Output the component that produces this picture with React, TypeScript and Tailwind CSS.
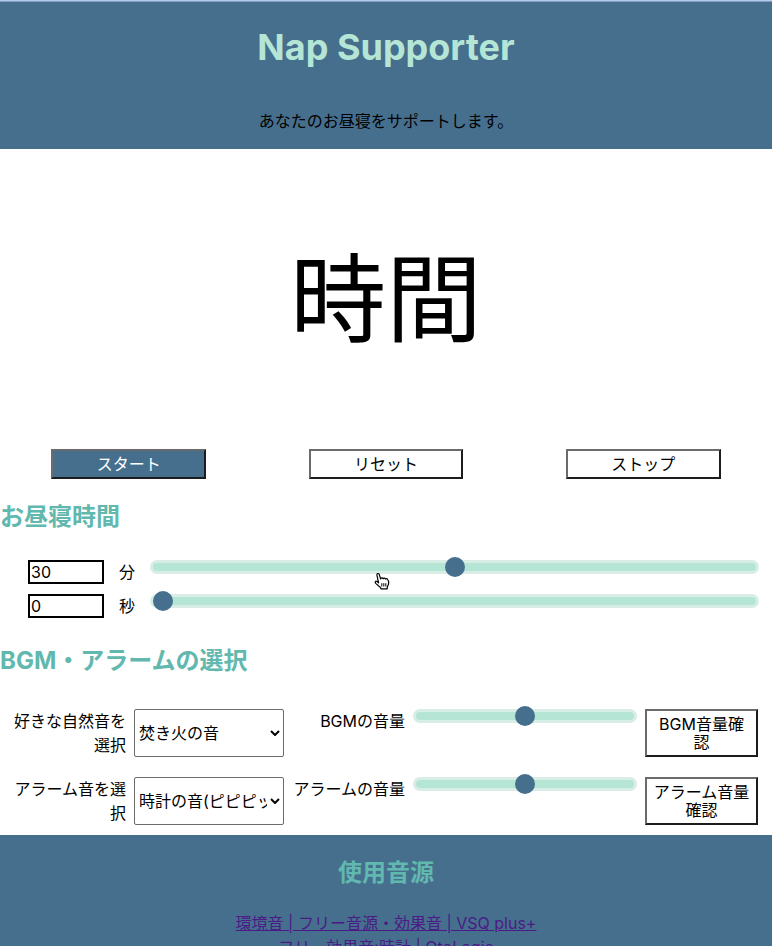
import { useState } from "react";

type SliderProps = {
  label: string;
  value: number;
  max: number;
  onChange: (value: number) => void;
};

function Slider({ label, value, max, onChange }: SliderProps) {
  return (
    <input
      type="range"
      aria-label={label}
      min={0}
      max={max}
      value={value}
      onChange={(e) => onChange(Number(e.target.value))}
      className="block h-[14px] w-full min-w-0 cursor-pointer appearance-none rounded-full border-[3px] border-[#d7ede5] bg-[#b5e5d5] [&::-webkit-slider-runnable-track]:h-2 [&::-webkit-slider-thumb]:-mt-[6px] [&::-webkit-slider-thumb]:size-5 [&::-webkit-slider-thumb]:appearance-none [&::-webkit-slider-thumb]:rounded-full [&::-webkit-slider-thumb]:bg-[#466f8e]"
    />
  );
}

const outset =
  "border-2 border-t-[#6b6b6b] border-l-[#6b6b6b] border-r-[#1c1c1c] border-b-[#1c1c1c]";

function ActionButton({ label, primary = false }: { label: string; primary?: boolean }) {
  return (
    <div className="flex justify-center">
      <button
        type="button"
        className={`h-[30px] w-3/5 ${outset} ${primary ? "bg-[#466f8e] text-white" : "bg-white"}`}
      >
        {label}
      </button>
    </div>
  );
}

function TimeRow({ id, unit, initial }: { id: string; unit: string; initial: number }) {
  const [value, setValue] = useState(initial);
  return (
    <div className="flex items-start gap-[15px] pr-[13px] pl-7">
      <input
        id={id}
        type="text"
        inputMode="numeric"
        value={value}
        onChange={(e) => setValue(Number(e.target.value) || 0)}
        className="h-6 w-[76px] border-2 border-black px-px"
      />
      <label htmlFor={id} className="shrink-0">
        {unit}
      </label>
      <Slider label={unit} value={value} max={60} onChange={setValue} />
    </div>
  );
}

type SoundRowProps = {
  id: string;
  label: string;
  options: string[];
  volumeLabel: string;
  checkLabel: string;
};

function SoundRow({ id, label, options, volumeLabel, checkLabel }: SoundRowProps) {
  const [volume, setVolume] = useState(50);
  return (
    <div className="grid grid-cols-[112px_150px_113px_1fr_113px] items-start gap-2 px-[14px] text-right">
      <label htmlFor={id}>{label}</label>
      <div className="relative">
        <select
          id={id}
          className="block h-12 w-full appearance-none rounded-xs border border-[#6b6b6b] bg-white pr-4 pl-1 text-left"
        >
          {options.map((option) => (
            <option key={option}>{option}</option>
          ))}
        </select>
        <svg
          viewBox="0 0 10 6"
          className="pointer-events-none absolute top-[21px] right-1 h-[6px] w-[10px]"
          fill="none"
          stroke="black"
          strokeWidth="2"
        >
          <path d="M1 1l4 4 4-4" />
        </svg>
      </div>
      <span>{volumeLabel}</span>
      <Slider label={volumeLabel} value={volume} max={100} onChange={setVolume} />
      <button type="button" className={`h-12 bg-white px-[6px] leading-[18px] ${outset}`}>
        {checkLabel}
      </button>
    </div>
  );
}

function HandPointer() {
  return (
    <svg
      viewBox="0 0 16 18"
      className="pointer-events-none absolute top-3 left-[374px] h-[18px] w-4"
      fill="white"
      stroke="black"
      strokeWidth="1.2"
      strokeLinejoin="round"
    >
      <path d="M4.6 10.8 2.900 3.200C2.600 1.300 4.700 .9 5.300 2.600L6.700 7C6.900 5.600 8.700 5.600 9.200 6.800 9.700 5.800 11.200 5.900 11.600 7.100 12.500 6.300 13.600 6.800 13.900 7.900 14.800 8.900 14.800 11 14.400 12.600L13.300 14.900 13.200 16.800H7L6.200 15.200 1.700 11.400C.5 10.200 1.700 8.700 3 9.500Z" />
      <path d="M7.800 11.200v3.300M9.800 11.200v3.300M11.800 11.200v3.300" strokeWidth="1" />
    </svg>
  );
}

export default function App() {
  return (
    <div className="flex h-screen flex-col overflow-hidden bg-white font-['Inter','Noto_Sans_CJK_JP',sans-serif] text-base text-black">
      <header className="shrink-0 border-t border-[#b5c9ea] bg-[#466f8e] pt-[19px] pb-4 text-center shadow-[inset_0_1px_#829fbf]">
        <h1 className="text-4xl leading-[54px] font-bold text-[#b5e5d5]">Nap Supporter</h1>
        <p className="mt-[35px]">あなたのお昼寝をサポートします。</p>
      </header>

      <main className="shrink-0 pb-[10px]">
        <p className="py-20 text-center text-8xl leading-[140px]">時間</p>
        <div className="grid grid-cols-3">
          <ActionButton label="スタート" primary />
          <ActionButton label="リセット" />
          <ActionButton label="ストップ" />
        </div>

        <h2 className="mt-5 text-2xl leading-9 font-bold text-[#61b8ae]">お昼寝時間</h2>
        <section className="relative mt-[25px] flex flex-col gap-[10px]">
          <TimeRow id="minutes" unit="分" initial={30} />
          <TimeRow id="seconds" unit="秒" initial={0} />
          <HandPointer />
        </section>

        <h2 className="mt-[25px] text-2xl leading-9 font-bold text-[#61b8ae]">
          BGM・アラームの選択
        </h2>
        <section className="mt-[30px] flex flex-col gap-5">
          <SoundRow
            id="bgm"
            label="好きな自然音を選択"
            options={["焚き火の音", "波の音", "雨の音"]}
            volumeLabel="BGMの音量"
            checkLabel="BGM音量確認"
          />
          <SoundRow
            id="alarm"
            label="アラーム音を選択"
            options={["時計の音(ピピピッ)", "ベルの音"]}
            volumeLabel="アラームの音量"
            checkLabel="アラーム音量確認"
          />
        </section>
      </main>

      <footer className="shrink-0 bg-[#466f8e] pt-5 pb-6 text-center">
        <h2 className="text-2xl leading-9 font-bold text-[#61b8ae]">使用音源</h2>
        <ul className="mt-5 text-[#4b1a86] underline">
          <li>
            <a href="#vsq">環境音 | フリー音源・効果音 | VSQ plus+</a>
          </li>
          <li>
            <a href="#otologic">フリー効果音:時計 | OtoLogic</a>
          </li>
        </ul>
      </footer>
    </div>
  );
}
